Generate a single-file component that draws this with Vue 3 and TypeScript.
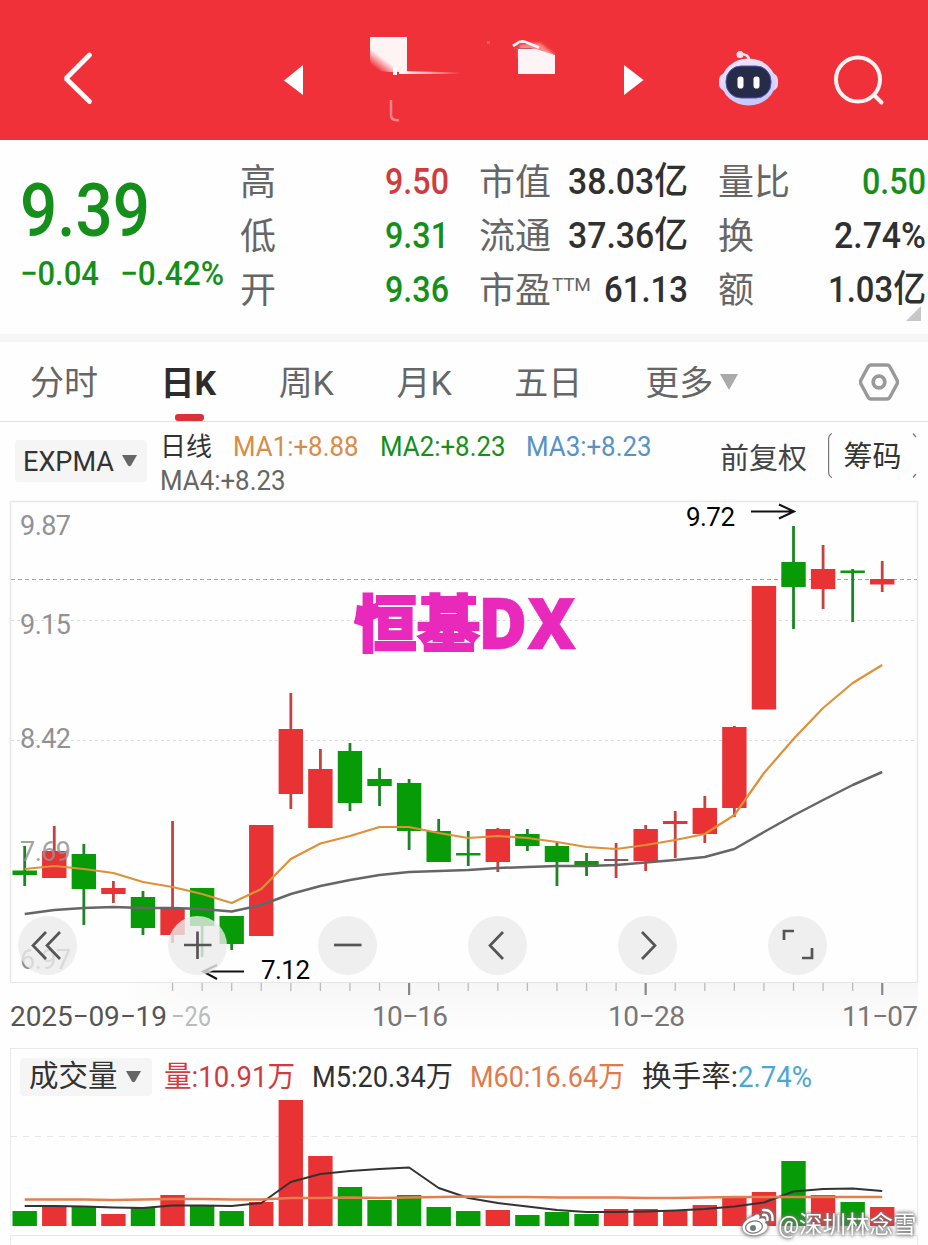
<script setup lang="ts">
import { h } from 'vue'

interface FitProps { t: string; w: number; s: number; weight?: number }

// A line of text condensed to an exact width; the colour is inherited.
const Fit = (p: FitProps) =>
  h('svg', { width: p.w, height: p.s, style: 'display:block;overflow:visible;flex:none' }, [
    h('text', {
      x: 0, y: p.s * 0.84, 'font-size': p.s, 'font-weight': p.weight ?? 400, fill: 'currentColor',
      textLength: p.w, lengthAdjust: 'spacingAndGlyphs',
    }, p.t),
  ])
Fit.props = ['t', 'w', 's', 'weight']

type Candle = [string, number, number, number, number, number]
// colour, body top, body bottom, high, low, volume top
const candles: Candle[] = [
  ['g', 870.5, 875, 846, 886, 1211], ['r', 851, 878, 826, 878, 1207], ['g', 854, 889, 844, 925, 1207],
  ['r', 888, 894, 881, 903, 1214], ['g', 897, 928, 891, 935, 1208], ['r', 908, 935, 821, 943, 1195],
  ['g', 888, 926, 888, 957, 1206], ['g', 916, 944, 916, 950, 1211], ['r', 825, 936, 825, 936, 1202],
  ['r', 729, 794, 693, 809, 1100], ['r', 769, 828, 749, 828, 1156], ['g', 751, 803, 743, 811, 1187],
  ['g', 779, 786, 768, 806, 1200], ['g', 783, 831, 779, 850, 1195], ['g', 831, 862, 819, 862, 1207],
  ['g', 853, 855.5, 831, 866, 1211], ['r', 829, 862, 828, 872, 1210], ['g', 834, 846, 829, 851, 1215],
  ['g', 846, 862, 843, 886, 1212], ['g', 861, 867, 853, 876, 1214], ['n', 859, 861, 843, 878, 1209],
  ['r', 829, 861, 825, 871, 1209], ['r', 821, 824, 811, 858, 1211], ['r', 808, 834, 796, 843, 1205],
  ['r', 727, 808, 726, 817, 1196], ['r', 586, 709.5, 586, 709, 1192], ['g', 562, 587, 526, 629, 1161],
  ['r', 569, 589, 545, 609, 1195], ['g', 570.5, 573, 569, 622, 1202], ['r', 579, 584.5, 561, 592, 1207],
]
const cx = (i: number) => 24.7 + i * 29.57
const line = (ys: number[]) => ys.map((y, i) => `${cx(i).toFixed(1)},${y}`).join(' ')
const ma1 = line([869, 866, 869, 873, 882, 887, 894, 903, 889, 859, 843.5, 836, 827, 827, 833, 838, 836, 838, 842, 847, 849, 845, 840, 834, 815, 773, 739, 708, 683, 665])
const ma2 = line([914, 910, 908, 907, 908, 908, 909, 911.5, 905, 894, 886, 880, 875, 872, 871, 870, 868, 867, 866, 866, 865, 862.5, 860, 857, 849, 832, 815.5, 800, 785, 772])
const m5 = line([1206, 1206, 1206.5, 1207.5, 1208, 1205.5, 1205.5, 1206, 1203, 1182, 1174, 1171, 1169, 1167.5, 1188, 1198, 1203, 1206.5, 1210, 1212, 1212, 1211.5, 1210.5, 1209, 1206.5, 1202.5, 1191.5, 1189, 1188.5, 1191])
const m60 = line([1199.5, 1199.5, 1199.5, 1200, 1199.5, 1199, 1199, 1199.5, 1199.5, 1198, 1198, 1197.5, 1198, 1197.5, 1197, 1196.5, 1197, 1197, 1197.5, 1197.5, 1197.5, 1198, 1198, 1197.5, 1197, 1197, 1197, 1197, 1197, 1197])
const fill = (c: string) => (c === 'g' ? '#079b07' : '#e93234')
const wick = (c: string) => (c === 'g' ? '#1b8424' : '#c9413f')
const ticks = Array.from({ length: 25 }, (_, k) => k + 5)

const stats = [
  [{ l: '高', v: '9.50', w: 64, c: 'red' }, { l: '市值', v: '38.03亿', w: 120, c: 'ink' }, { l: '量比', v: '0.50', w: 64, c: 'green' }],
  [{ l: '低', v: '9.31', w: 64, c: 'green' }, { l: '流通', v: '37.36亿', w: 120, c: 'ink' }, { l: '换', v: '2.74%', w: 92, c: 'ink' }],
  [{ l: '开', v: '9.36', w: 64, c: 'green' }, { l: '市盈', sup: 'TTM', v: '61.13', w: 84, c: 'ink' }, { l: '额', v: '1.03亿', w: 98, c: 'ink' }],
]
const tabs = ['分时', '日K', '周K', '月K', '五日', '更多']
const tools = [
  'M43 33L30 46.500L43 60M57 33L44 46.500L57 60',
  'M44.500 32.500V60M31 46H58.500', 'M31 46H58.500', 'M50 33L37 46.500L50 60', 'M39 33L52 46.500L39 60',
  'M31 41V32H41M59 49V59H49',
]
</script>

<template>
  <main class="page">
    <header class="top">
      <svg class="bar" width="928" height="140" viewBox="0 0 928 140">
        <defs>
          <linearGradient id="patch" x1="0" y1="1" x2=".45" y2=".45"><stop offset="0" stop-color="#f03139" /><stop offset=".25" stop-color="#f03139" /><stop offset=".75" stop-color="#fff3f4" /></linearGradient>
          <linearGradient id="streak"><stop stop-color="#fff" /><stop offset=".4" stop-color="#fbb" /><stop offset="1" stop-color="#f03139" /></linearGradient>
          <linearGradient id="shell" x2=".3" y2="1"><stop stop-color="#f8e8fa" /><stop offset="1" stop-color="#c9c9fb" /></linearGradient>
          <filter id="haze"><feGaussianBlur stdDeviation="1.500" /></filter>
        </defs>
        <path d="M89.500 55L66 78.500L89.500 101.500" fill="none" stroke="#fff" stroke-width="4.800" stroke-linecap="round" stroke-linejoin="bevel" />
        <path d="M303 65V95L284 80.500Z" fill="#fff" />
        <path d="M370 37H407V72H390Q372 72 370 60Z" fill="url(#patch)" />
        <path d="M393 67H397V75H393Z" fill="#fff" />
        <path d="M399 71L462 72.500V74L399 74Z" fill="url(#streak)" />
        <path d="M391 100V116Q392 121 399 120" fill="none" stroke="#fa8489" stroke-width="2.500" />
        <path d="M520 44L540 43L554 54V58H518Z" fill="#f9898e" filter="url(#haze)" />
        <path d="M518 49H536L555 55V74H518Z" fill="#fff4f5" />
        <path d="M513 46L517 43.500Q521 39.500 528 43L539 47.500" fill="none" stroke="#fff3f3" stroke-width="2.800" />
        <path d="M514 48.500H532M519 44H526" stroke="#c65b60" stroke-width="1" />
        <path d="M487 41H490V44H487Z" fill="#f55d63" />
        <path d="M624 65L643.500 80L624 95Z" fill="#fff" />
        <g>
          <path d="M749 60Q749 54 740 54" fill="none" stroke="#f8dce6" stroke-width="2.500" />
          <circle cx="740" cy="54.500" r="3.500" fill="#fbdfe6" />
          <rect x="719" y="73" width="59" height="18" rx="7" fill="#e4d7f6" />
          <ellipse cx="748.500" cy="82" rx="27" ry="23.500" fill="url(#shell)" />
          <rect x="726" y="66" width="45" height="32" rx="15" fill="#262b48" stroke="#5053b5" stroke-width="1" />
          <rect x="737.500" y="76.500" width="6" height="12" rx="2.800" fill="#fff" />
          <rect x="753.500" y="76.500" width="6" height="12" rx="2.800" fill="#fff" />
        </g>
        <circle cx="858" cy="79.500" r="22" fill="none" stroke="#fff2f2" stroke-width="4" />
        <path d="M874 95L881.500 102.500" stroke="#fff2f2" stroke-width="4" stroke-linecap="round" />
        <path d="M0 139.500H928" stroke="#bd454b" stroke-width="1" />
      </svg>
    </header>

    <section class="quote">
      <div class="price green">
        <Fit t="9.39" :w="130" :s="75" :weight="500" />
        <div class="change">
          <Fit t="−0.04" :w="79" :s="34" :weight="500" />
          <Fit t="−0.42%" :w="104" :s="34" :weight="500" />
        </div>
      </div>
      <div class="stats">
        <template v-for="(row, r) in stats" :key="r">
          <div v-for="s in row" :key="s.l" class="stat">
            <span class="label">{{ s.l }}<sup v-if="s.sup">{{ s.sup }}</sup></span>
            <Fit :class="s.c" :t="s.v" :w="s.w" :s="37" :weight="500" />
          </div>
        </template>
      </div>
      <svg class="corner" width="15" height="15"><path d="M15 0V15H0Z" fill="#c8c8c8" /></svg>
    </section>

    <nav class="tabs">
      <span v-for="t in tabs" :key="t" class="tab" :class="{ on: t === '日K' }"><b>{{ t }}</b><svg v-if="t === '更多'" class="caret" width="18" height="16"><path d="M0 0H18L9 16Z" fill="#aaa" /></svg></span>
      <svg class="gear" width="40" height="38" viewBox="0 0 40 38">
        <path d="M12 2H28Q30 2 31 4L38 17Q39 19 38 21L31 34Q30 36 28 36H12Q10 36 9 34L2 21Q1 19 2 17L9 4Q10 2 12 2Z" fill="none" stroke="#999" stroke-width="3.500" />
        <circle cx="20" cy="19" r="5.800" fill="none" stroke="#999" stroke-width="3.800" />
      </svg>
    </nav>

    <section class="indicator">
      <button class="pick"><Fit t="EXPMA" :w="91" :s="28" /><svg width="15" height="12"><path d="M0 0H15L9 10.500Q7.500 12 6 10.500Z" fill="#666" /></svg></button>
      <div class="averages">
        <div class="avgrow"><span class="name">日线</span><Fit class="orange" t="MA1:+8.88" :w="125.500" :s="27.500" /><Fit class="green" t="MA2:+8.23" :w="125.500" :s="27.500" /><Fit class="blue" t="MA3:+8.23" :w="125.500" :s="27.500" /></div>
        <Fit class="grey" t="MA4:+8.23" :w="125.500" :s="27.500" />
      </div>
      <span class="adjust">前复权</span>
      <span class="chips">筹码<svg width="89" height="45" viewBox="0 0 89 45" fill="none" stroke="#777" stroke-width="1.200"><path d="M4 .5Q.6 2 .6 6V39Q.6 43 4 44.500M85 .5L88 4M88 41L85 44.500" /></svg></span>
    </section>

    <section class="chart">
      <svg width="928" height="548" viewBox="0 500 928 548">
        <defs>
          <linearGradient id="fade" x2="0" y2="1"><stop stop-color="#f6f6f6" /><stop offset="1" stop-color="#fefefe" /></linearGradient>
          <linearGradient id="side"><stop stop-color="#fefefe" /><stop offset="1" stop-color="#fefefe" stop-opacity="0" /></linearGradient>
        </defs>
        <rect x="120" y="983" width="798" height="52" fill="url(#fade)" />
        <rect x="119" y="983" width="90" height="52" fill="url(#side)" />
        <path d="M10.500 983V501.500H917.500V983" fill="none" stroke="#e8e8e8" stroke-width="1.500" />
        <path d="M10 982.500H918" stroke="#e6e6e6" />
        <path d="M11 620.500H917M11 740.500H917" stroke="#ddd" stroke-dasharray="3 3" />
        <path d="M11 579.500H917" stroke="#a9a985" stroke-dasharray="4 3" />
        <g fill="#929292" font-size="27">
          <text x="20" y="534.500" textLength="51">9.87</text>
          <text x="20" y="633.500" textLength="51">9.15</text>
          <text x="20" y="747.500" textLength="51">8.42</text>
          <text x="20" y="968.500" textLength="51">6.97</text>
        </g>
        <g v-for="(c, i) in candles" :key="i">
          <path :d="`M${cx(i)} ${c[3]}V${c[4]}`" :stroke="wick(c[0])" stroke-width="2.800" />
          <rect :x="cx(i) - 12.200" :y="c[1]" width="24.400" :height="c[2] - c[1]" :fill="c[0] === 'n' ? '#84585a' : fill(c[0])" />
        </g>
        <text x="20" y="861" fill="#929292" fill-opacity=".85" font-size="27" textLength="51">7.69</text>
        <polyline :points="ma2" fill="none" stroke="#666" stroke-width="2.500" stroke-linejoin="round" />
        <polyline :points="ma1" fill="none" stroke="#df9137" stroke-width="2.200" stroke-linejoin="round" />
        <text class="tag" x="354" y="647" textLength="126" lengthAdjust="spacingAndGlyphs">恒基</text>
        <text class="tag latin" x="478" y="649" textLength="98" lengthAdjust="spacingAndGlyphs">DX</text>
        <g stroke="#111" stroke-width="2" fill="none">
          <path d="M751 511.500H794M779 504.500L794 511.500L779 518.500M244 971.500H204M217 965L203 971.500L217 979" />
        </g>
        <text x="686" y="526" font-size="26" textLength="49">9.72</text>
        <text x="261" y="979" font-size="26" textLength="49">7.12</text>
        <g v-for="i in ticks" :key="i">
          <path :d="`M${cx(i)} 983V${[13, 21, 29].includes(i) ? 995 : 991}`" :stroke="[13, 21, 29].includes(i) ? '#888' : '#bbb'" :stroke-width="[13, 21, 29].includes(i) ? 2.200 : 1.300" />
        </g>
        <g font-size="28" fill="#777">
          <text x="10" y="1026" fill="#555" textLength="157">2025−09−19</text>
          <text x="171" y="1026" fill="#bbb" textLength="40" lengthAdjust="spacingAndGlyphs">−26</text>
          <text x="372" y="1026" textLength="76">10−16</text>
          <text x="608" y="1026" textLength="77">10−28</text>
          <text x="842" y="1026" textLength="76">11−07</text>
        </g>
      </svg>
      <div class="tools">
        <svg v-for="(d, i) in tools" :key="i" width="59" height="59" viewBox="15 17 59 59">
          <circle cx="44.500" cy="46.500" r="29.500" fill="#ebebeb" fill-opacity=".8" />
          <path :d="d" fill="none" stroke="#555" stroke-width="2.700" />
        </svg>
      </div>
    </section>

    <section class="volume">
      <div class="legend">
        <button class="pick vol"><span>成交量</span><svg width="15" height="12"><path d="M0 0H15L9 10.500Q7.500 12 6 10.500Z" fill="#666" /></svg></button>
        <Fit class="red" t="量:10.91万" :w="131" :s="29" />
        <Fit class="ink" t="M5:20.34万" :w="141" :s="29" />
        <Fit class="salmon" t="M60:16.64万" :w="155" :s="29" />
        <div class="turn"><Fit class="ink" t="换手率:" :w="96" :s="29" /><Fit class="sky" t="2.74%" :w="74" :s="29" /></div>
      </div>
      <svg class="bars" width="928" height="149" viewBox="0 1096 928 149">
        <path d="M10.500 1096V1226M917.500 1096V1226" stroke="#ececec" />
        <path d="M11 1136.500H917" stroke="#e5e5e5" stroke-dasharray="6 6" />
        <rect v-for="(c, i) in candles" :key="i" :x="cx(i) - 12.200" :y="c[5]" width="24.400" :height="1226 - c[5]" :fill="fill(c[0])" />
        <polyline :points="m5" fill="none" stroke="#333" stroke-width="2" stroke-linejoin="round" />
        <polyline :points="m60" fill="none" stroke="#e1804e" stroke-width="2.500" />
        <path d="M10.500 1245V1235.500H917.500V1245" fill="none" stroke="#e8e8e8" />
      </svg>
      <div class="mark">
        <svg width="34" height="30" viewBox="0 0 34 30">
          <path d="M13 8C17 5 20 7 18 11C23 9 26 11 24 15C29 17 26 24 19 26C11 29 2 26 1.500 20C1 15 7 10 13 8Z" fill="#fff" />
          <ellipse cx="13" cy="19" rx="8.500" ry="6" fill="none" stroke="#777" stroke-width="1.200" transform="rotate(-10 13 19)" />
          <circle cx="12" cy="20" r="3" fill="#777" />
          <path d="M22 2Q32 1 31.500 12M22 7Q27 6 26.500 12" fill="none" stroke="#fff" stroke-width="2.500" stroke-linecap="round" />
        </svg>
        <span>@深圳林念雪</span>
      </div>
    </section>
  </main>
</template>

<style>
html, body { margin: 0; background: #fff; overflow: hidden; }
</style>

<style scoped>
.page { width: 928px; height: 1245px; overflow: hidden; background: #fefefe; color: #333; font-family: Roboto, "Noto Sans CJK SC", sans-serif; }
.page svg { display: block; flex: none; }
.top { height: 140px; background: #f13139; }
.red { color: #ce3c3f; } .green { color: #14901a; } .ink { color: #303030; } .orange { color: #d88c45; }
.blue { color: #5792c6; } .grey { color: #666; } .salmon { color: #df7b4c; } .sky { color: #4ca6d2; }
.quote { height: 194px; display: flex; position: relative; border-bottom: 8px solid #f6f6f6; }
.price { width: 240px; box-sizing: border-box; padding: 33px 0 0 20px; }
.change { display: flex; gap: 21px; margin-top: 8px; }
.stats { flex: none; display: grid; grid-template-columns: 209px 209px 208px; grid-template-rows: repeat(3, 54px); column-gap: 30px; padding-top: 14px; }
.stat { display: flex; align-items: center; justify-content: space-between; }
.label { font-size: 36px; line-height: 50px; padding-top: 4px; color: #666; white-space: nowrap; }
.label sup { font-size: 19px; line-height: 0; vertical-align: 12px; margin-left: 1px; letter-spacing: -.3px; }
.corner { position: absolute; right: 7px; bottom: 13px; }
.tabs { height: 79px; border-bottom: 1px solid #e2e2e2; display: flex; align-items: center; padding-left: 30px; font-size: 34px; color: #666; }
.tab { height: 79px; line-height: 75px; margin-right: 62.500px; white-space: nowrap; display: flex; align-items: center; position: relative; }
.tab b { font-weight: inherit; padding-top: 4px; }
.tab:nth-child(5) { margin-right: 63px; }
.tab.on { color: #2c2c2c; font-weight: 700; }
.tab.on::after { content: ""; position: absolute; left: 14px; bottom: 0; width: 29px; height: 7px; border-radius: 3px; background: #d93337; }
.caret { margin-left: 7px; }
.gear { margin-left: 58px; }
.indicator { height: 78px; display: flex; }
.pick { border: 0; font: inherit; color: #333; background: #f5f5f5; border-radius: 4px; display: flex; align-items: center; gap: 8px; width: 132px; height: 42px; padding: 0 8px; margin: 18px 13px 0 15px; flex: none; }
.averages { width: 560px; padding-top: 8px; box-sizing: border-box; }
.avgrow { display: flex; align-items: center; gap: 21px; height: 34px; margin-bottom: 3px; }
.name { font-size: 26px; line-height: 34px; width: 52px; }
.adjust { font-size: 29px; line-height: 74px; color: #444; width: 108px; }
.chips { width: 89px; height: 45px; margin-top: 11px; font-size: 29px; line-height: 49px; text-align: center; position: relative; }
.chips svg { position: absolute; left: 0; top: 0; }
.chart { height: 548px; position: relative; }
.tag { font-family: "Noto Sans CJK SC", sans-serif; font-weight: 900; font-size: 62px; fill: #e829bb; stroke: #e829bb; stroke-width: 1.800px; }
.tag.latin { font-family: "Open Sans", sans-serif; font-weight: 800; font-size: 71px; stroke-width: .6px; }
.tools { position: absolute; left: 18px; top: 416px; display: flex; gap: 91px; }
.volume { height: 197px; position: relative; }
.legend { height: 48px; box-sizing: border-box; margin: 0 10px; border: 1px solid #e8e8e8; border-bottom: 0; display: flex; align-items: center; gap: 17px; padding: 9px 0 0 9px; }
.pick.vol { margin: 0 -5px 0 0; height: 38px; line-height: 38px; font-size: 29.500px; gap: 8px; padding-left: 9px; }
.pick.vol span { margin-top: -2px; }
.turn { display: flex; }
.mark { position: absolute; left: 741px; top: 158px; display: flex; align-items: center; gap: 3px; color: #fff; font-size: 23.500px; white-space: nowrap; filter: drop-shadow(0 0 2px #666) drop-shadow(0 0 1px #888); }
</style>
